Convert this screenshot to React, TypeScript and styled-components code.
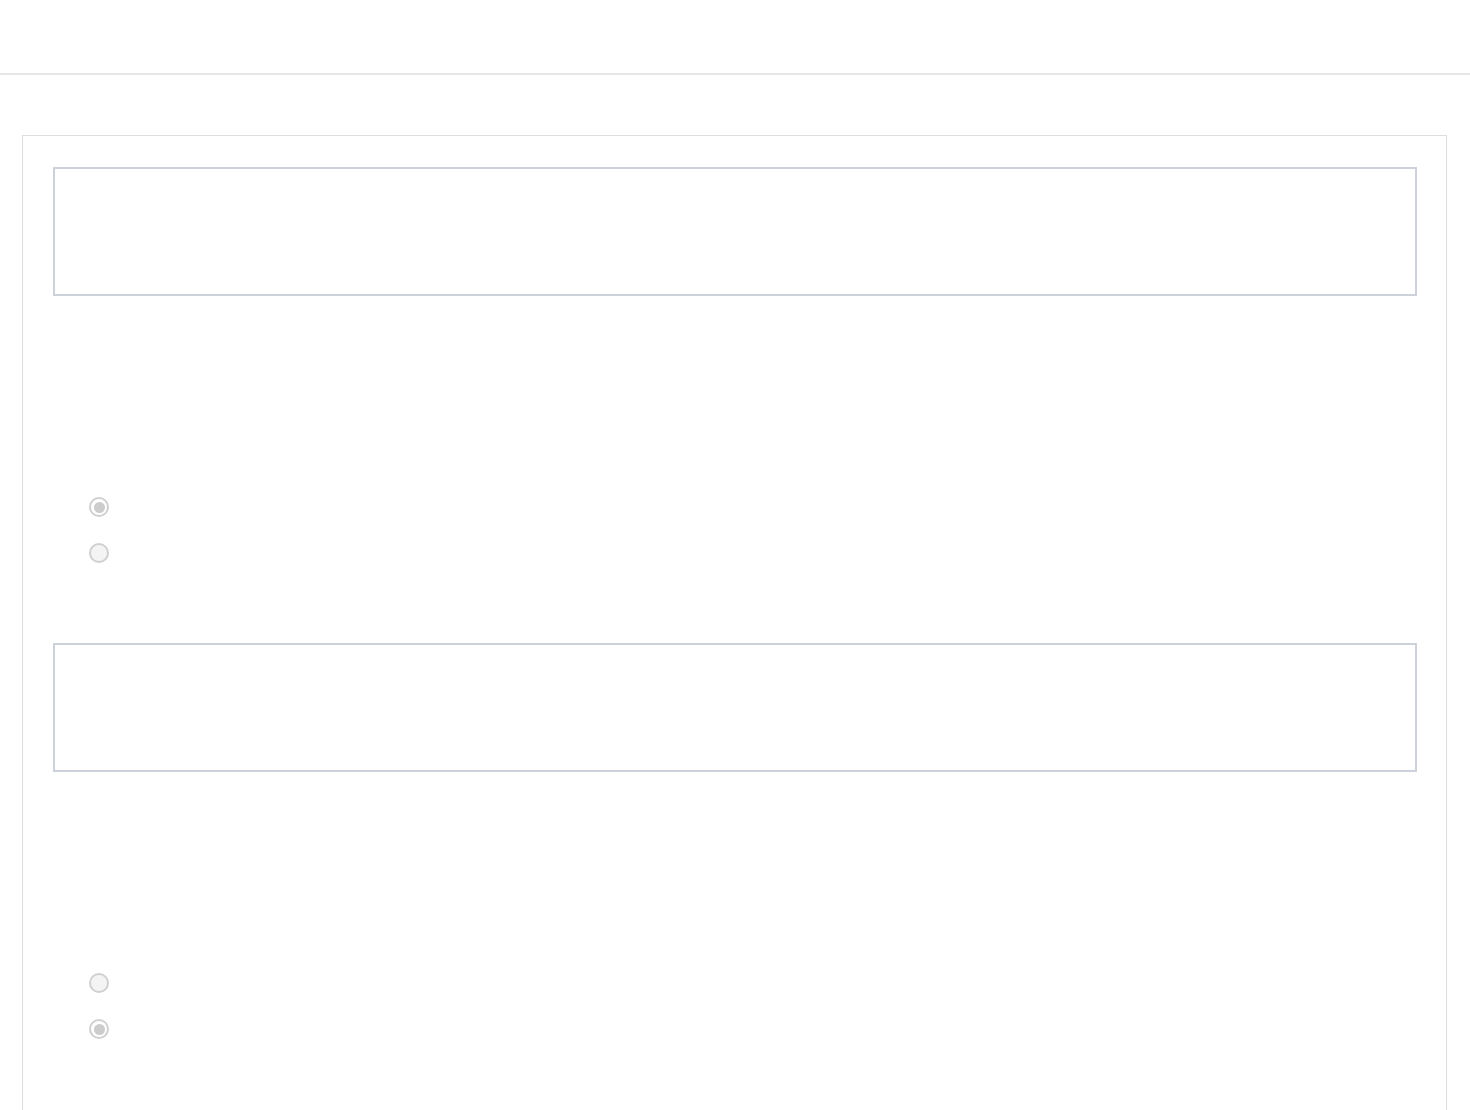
import styled, { createGlobalStyle } from "styled-components";

const GlobalStyle = createGlobalStyle`
  html, body {
    margin: 0;
    padding: 0;
    background: #ffffff;
    font-family: "Liberation Sans", Arial, sans-serif;
  }
`;

const Page = styled.div`
  width: 1470px;
  min-height: 1110px;
  background: #ffffff;
`;

const TopBar = styled.header`
  height: 73px;
  border-bottom: 2px solid #e8e5e7;
`;

const Main = styled.main`
  padding: 60px 23px 0 22px;
`;

const Card = styled.section`
  border: 1px solid #dedede;
  border-bottom: none;
  padding: 31px 29px 0 30px;
  min-height: 980px;
`;

const Question = styled.div`
  display: flex;
  flex-direction: column;
  padding-bottom: 67px;
`;

const PromptBox = styled.div`
  height: 125px;
  border: 2px solid #cdd1da;
`;

const QuestionText = styled.div`
  height: 188px;
`;

const Options = styled.ul`
  list-style: none;
  margin: 0;
  padding: 0 0 0 36px;
  display: flex;
  flex-direction: column;
`;

const Option = styled.li`
  height: 46px;
  display: flex;
  align-items: center;
  gap: 12px;
  color: #ffffff;
  font-size: 16px;
`;

const Radio = styled.span<{ $checked?: boolean }>`
  box-sizing: border-box;
  width: 20px;
  height: 20px;
  border-radius: 50%;
  border: 2px solid #d0d0d0;
  background: ${(p) => (p.$checked ? "#ffffff" : "#f4f4f4")};
  display: flex;
  align-items: center;
  justify-content: center;
  flex-shrink: 0;

  &::after {
    content: "";
    display: ${(p) => (p.$checked ? "block" : "none")};
    width: 11px;
    height: 11px;
    border-radius: 50%;
    background: #cccccc;
  }
`;

const questions = [
  { answer: 0, options: ["", ""] },
  { answer: 1, options: ["", ""] },
];

export default function App() {
  return (
    <Page>
      <GlobalStyle />
      <TopBar />
      <Main>
        <Card>
          {questions.map((q, qi) => (
            <Question key={qi}>
              <PromptBox />
              <QuestionText />
              <Options>
                {q.options.map((label, oi) => (
                  <Option key={oi}>
                    <Radio $checked={q.answer === oi} />
                    {label}
                  </Option>
                ))}
              </Options>
            </Question>
          ))}
        </Card>
      </Main>
    </Page>
  );
}
